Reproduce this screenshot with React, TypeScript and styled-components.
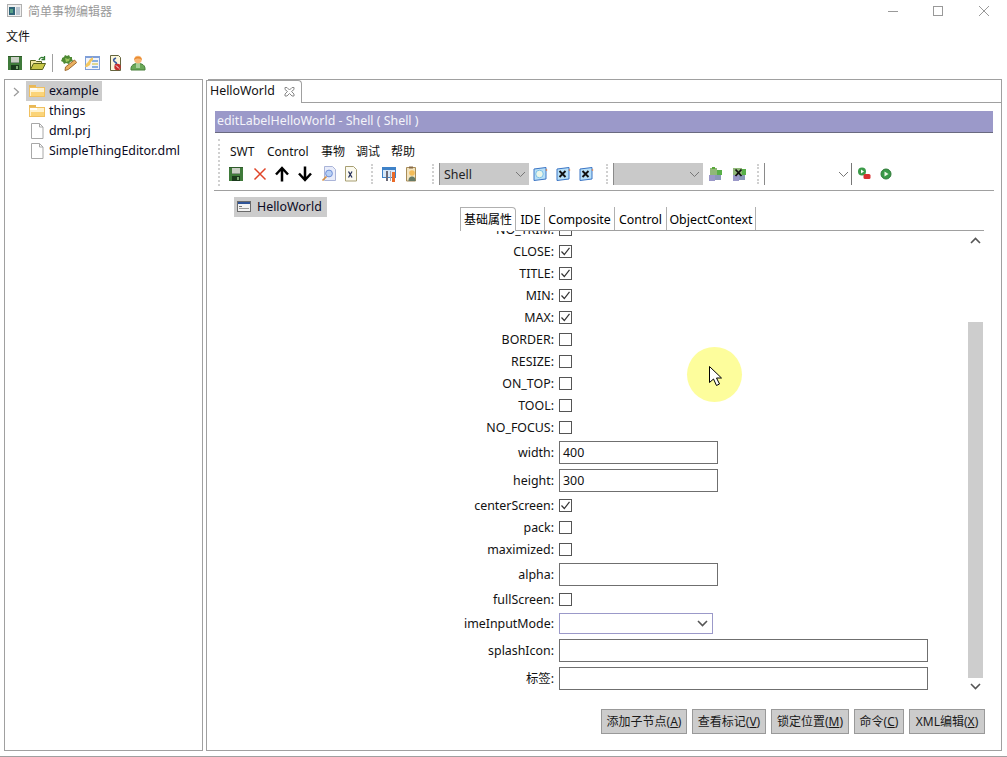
import React from "react";
import styled, { createGlobalStyle } from "styled-components";

const Global = createGlobalStyle`
  html, body { margin: 0; padding: 0; background: #fff; }
  body { font-family: "Noto Sans", "Noto Sans CJK SC", sans-serif; font-size: 12.4px; color: #000; }
`;

const Page = styled.div`
  position: relative;
  width: 1007px;
  height: 757px;
  overflow: hidden;
  background: #fff;
`;
const Placed = styled.div<{ $x: number; $y: number; $w?: number; $h?: number }>`
  position: absolute;
  left: ${(p) => p.$x}px;
  top: ${(p) => p.$y}px;
  ${(p) => (p.$w !== undefined ? `width: ${p.$w}px;` : "")}
  ${(p) => (p.$h !== undefined ? `height: ${p.$h}px;` : "")}
`;
const TitleText = styled(Placed)`
  color: #9a9a9a;
  font-size: 12px;
  line-height: 16px;
  white-space: nowrap;
`;
const MenuLabel = styled(Placed)`
  font-size: 12px;
  line-height: 16px;
  color: #111;
  white-space: nowrap;
`;
const IconSlot = styled(Placed)`
  width: 16px;
  height: 16px;
  line-height: 0;
`;
const VLine = styled(Placed)<{ $color?: string }>`
  width: 1px;
  background: ${(p) => p.$color ?? "#a0a0a0"};
`;
const HLine = styled(Placed)<{ $color?: string }>`
  height: 1px;
  background: ${(p) => p.$color ?? "#a0a0a0"};
`;
const Panel = styled(Placed)`
  box-sizing: border-box;
  border: 1px solid #a0a0a0;
  background: #fff;
`;
const MaxBox = styled(Placed)`
  box-sizing: border-box;
  border: 1px solid #999;
`;
const TreeHighlight = styled(Placed)`
  background: #cccccc;
`;
const TreeText = styled(Placed)`
  line-height: 18px;
  white-space: nowrap;
  color: #0a0a24;
`;
const TabTitle = styled(TreeText)`
  color: #111;
`;
const EditorTab = styled(Placed)`
  box-sizing: border-box;
  border: 1px solid #a0a0a0;
  border-bottom: none;
  border-radius: 0 4px 0 0;
  background: #fff;
`;
const TitleBand = styled(Placed)`
  box-sizing: border-box;
  background: #9b99c9;
  border-bottom: 1px solid #6a6a80;
  color: #f4f4fa;
  padding-left: 2px;
  line-height: 20px;
  white-space: nowrap;
`;
const Grip = styled(Placed)`
  width: 0;
  border-left: 2px dotted #d0d0d0;
`;
const Combo = styled(Placed)<{ $filled?: boolean }>`
  box-sizing: border-box;
  background: ${(p) => (p.$filled ? "#c9c9c9" : "#fff")};
  border-left: 1px solid #8a8a8a;
  padding-left: 4px;
  line-height: 24px;
  color: #222;
`;
const Chevron = styled.svg`
  position: absolute;
  right: 3px;
  top: 8px;
`;
const TabLabel = styled(Placed)`
  line-height: 18px;
  white-space: nowrap;
  text-align: center;
  color: #000;
`;
const CjkTabLabel = styled(TabLabel)`
  font-size: 12px;
`;
const ActiveTab = styled(Placed)`
  box-sizing: border-box;
  border: 1px solid #b0b0b0;
  border-bottom: none;
  border-radius: 0 4px 0 0;
  background: #fff;
`;
const FormLabel = styled(Placed)`
  width: 199px;
  text-align: right;
  line-height: 18px;
  white-space: nowrap;
  color: #111;
`;
const Check = styled(Placed)`
  box-sizing: border-box;
  width: 13px;
  height: 13px;
  border: 1px solid #555;
  background: #fff;
  line-height: 0;
`;
const Field = styled(Placed)`
  box-sizing: border-box;
  border: 1px solid #6f6f6f;
  background: #fff;
  padding-left: 3px;
  line-height: 21px;
  color: #111;
`;
const SelectField = styled(Placed)`
  box-sizing: border-box;
  border: 1px solid #9b99c9;
  background: #fff;
`;
const ClipArea = styled(Placed)`
  overflow: hidden;
`;
const Thumb = styled(Placed)`
  background: #cdcdcd;
`;
const ActionButton = styled(Placed)`
  box-sizing: border-box;
  height: 25px;
  background: #cccccc;
  border: 1px solid #999;
  text-align: center;
  line-height: 24px;
  font-size: 12px;
  white-space: nowrap;
  color: #1a1a1a;
  u { text-decoration: underline; }
`;
const Spot = styled(Placed)`
  border-radius: 50%;
  background: #fdfd9c;
`;

const Save = () => (
  <svg width="16" height="16" viewBox="0 0 16 16" shapeRendering="crispEdges">
    <rect x="1" y="1" width="14" height="14" fill="#3f7a3a" />
    <rect x="1" y="1" width="14" height="1" fill="#2e5a2a" />
    <rect x="4" y="2" width="8" height="6" fill="#c9cfc4" />
    <rect x="4" y="7" width="8" height="1" fill="#8a968a" />
    <rect x="4" y="10" width="8" height="5" fill="#1a3a1c" />
    <rect x="9" y="11" width="2" height="3" fill="#7ca872" />
  </svg>
);
const OpenFolder = () => (
  <svg width="16" height="16" viewBox="0 0 16 16">
    <path d="M0.5 5.5h5l1 1h5v8h-11z" fill="#f0e8a0" stroke="#55601c" />
    <path d="M3.5 8.5h12l-3 6h-12z" fill="#c8c648" stroke="#55601c" />
    <path d="M9 5c1-3 3-3 5-2M14.5 1v3.5h-3" fill="none" stroke="#2f7a2f" strokeWidth="1.3" />
  </svg>
);
const Wand = () => (
  <svg width="16" height="16" viewBox="0 0 16 16">
    <path d="M4 15.5l0.5-3.5 9-7 2.2 2.5-8.5 7z" fill="#eab060" stroke="#a06c30" />
    <path d="M1 3l2-1 1-2 2 1 2-1 1 2 2 0 0 2 1 2-3 1-1 2-3-1-2 1-1-2-2-1 1-2z" fill="#4f8a34" />
    <path d="M4 3l3 1 2-1-1 3-3 1z" fill="#9cc860" />
  </svg>
);
const Chart = () => (
  <svg width="16" height="16" viewBox="0 0 16 16" shapeRendering="crispEdges">
    <rect x="1" y="1" width="15" height="14" fill="#7f9fd8" />
    <rect x="2" y="3" width="13" height="11" fill="#f2f4fa" />
    <rect x="8" y="5" width="6" height="2" fill="#88b0e0" />
    <rect x="8" y="8" width="6" height="2" fill="#e0d890" />
    <rect x="8" y="11" width="6" height="2" fill="#88b0e0" />
    <path d="M1 12l1-3 2-2 2-3 3-2v3l-2 2-1 3-3 2z" fill="#f4c860" shapeRendering="auto" />
  </svg>
);
const DocBadge = () => (
  <svg width="16" height="16" viewBox="0 0 16 16">
    <path d="M2.5 0.5h8l2 2v13h-10z" fill="#fbf6dc" stroke="#64643e" />
    <path d="M8 3c-3 1-3 3-1 4s2 2 0 3" fill="none" stroke="#3a5aa0" strokeWidth="1.6" />
    <circle cx="9.5" cy="12" r="3.2" fill="#c82c2c" />
    <path d="M8 10.5l3 3" stroke="#fff" />
  </svg>
);
const Person = () => (
  <svg width="16" height="16" viewBox="0 0 16 16">
    <path d="M1 15c-0.5-5 3-6.5 7-6.5s7.5 1.5 7 6.5z" fill="#6aa858" stroke="#477f38" />
    <rect x="6" y="8" width="4" height="5" fill="#a8d098" />
    <circle cx="8" cy="4.6" r="3.8" fill="#f6b878" />
    <path d="M4 5C4 0.5 12 0.5 12 5 9.5 3.2 7 3 4 5z" fill="#ea8a30" />
  </svg>
);
const Folder = () => (
  <svg width="16" height="16" viewBox="0 0 16 16" shapeRendering="crispEdges">
    <rect x="0" y="2" width="7" height="2" fill="#e8b858" />
    <rect x="0" y="4" width="16" height="10" fill="#f0c060" />
    <rect x="1" y="5" width="14" height="8" fill="#fff2cc" />
    <rect x="1" y="5" width="7" height="2" fill="#fff" />
    <rect x="2" y="9" width="13" height="4" fill="#fbd478" />
  </svg>
);
const FileIcon = () => (
  <svg width="16" height="16" viewBox="0 0 16 16">
    <path d="M1.5 0.5h8l3.5 3.5v11.5h-11.500z" fill="#fff" stroke="#a8a8a8" />
    <path d="M9.5 0.500v3.500h3.500" fill="none" stroke="#a8a8a8" />
  </svg>
);
const Win = () => (
  <svg width="16" height="16" viewBox="0 0 16 16" shapeRendering="crispEdges">
    <rect x="2" y="2" width="14" height="11" fill="#6a6a6a" />
    <rect x="3" y="3" width="12" height="9" fill="#f2f2f2" />
    <rect x="3" y="3" width="12" height="2" fill="#2f5498" />
    <rect x="4" y="7" width="3" height="1" fill="#777" />
    <rect x="4" y="9" width="10" height="1" fill="#999" />
  </svg>
);
const RedX = () => (
  <svg width="16" height="16" viewBox="0 0 16 16">
    <path d="M2.500 2.500l11 11M13.500 2.500l-11 11" stroke="#e04428" strokeWidth="1.5" />
  </svg>
);
const Up = () => (
  <svg width="16" height="16" viewBox="0 0 16 16">
    <path d="M8 15.500V3M2 8.500L8 2l6 6.500" fill="none" stroke="#000" strokeWidth="2.500" />
  </svg>
);
const Down = () => (
  <svg width="16" height="16" viewBox="0 0 16 16">
    <path d="M8 0.500V13M2 7.500L8 14l6-6.500" fill="none" stroke="#000" strokeWidth="2.500" />
  </svg>
);
const Preview = () => (
  <svg width="16" height="16" viewBox="0 0 16 16">
    <path d="M3.500 0.500h8l3 3v11h-11z" fill="#e8ecfa" stroke="#aab4d8" />
    <circle cx="8" cy="7.500" r="3.400" fill="#b8d0f4" stroke="#6f8fd8" />
    <path d="M5.500 10.500L1.500 14.500" stroke="#d89040" strokeWidth="1.700" />
  </svg>
);
const XDoc = () => (
  <svg width="16" height="16" viewBox="0 0 16 16">
    <path d="M1.500 0.500h8l3 3v11.500h-11z" fill="#fbfaf0" stroke="#a89f72" />
    <path d="M4.500 5.500l3.500 6M8 5.500l-3.500 6" stroke="#26305a" strokeWidth="1.300" />
  </svg>
);
const Tools = () => (
  <svg width="16" height="16" viewBox="0 0 16 16" shapeRendering="crispEdges">
    <rect x="1" y="1" width="14" height="11" fill="#3e82c8" />
    <rect x="2" y="4" width="12" height="7" fill="#d8e8f8" />
    <rect x="5" y="5" width="2" height="10" fill="#6a6a78" />
    <rect x="9" y="5" width="1" height="10" fill="#a8a8b0" />
    <rect x="11" y="6" width="3" height="10" fill="#ea6a28" />
  </svg>
);
const BadgeDoc = () => (
  <svg width="16" height="16" viewBox="0 0 16 16">
    <path d="M3.500 1.500h9v13.500h-9z" fill="#f2e4c0" stroke="#a88c58" />
    <rect x="6" y="0.500" width="4" height="2" fill="#8a6a44" />
    <circle cx="9" cy="7" r="2.800" fill="#f4bc58" />
    <path d="M5.500 15c0-3.500 1.600-4.500 3.500-4.500s3.500 1 3.500 4.500z" fill="#667a66" />
  </svg>
);
const Globe = () => (
  <svg width="16" height="16" viewBox="0 0 16 16">
    <path d="M2 3l12-1.500v11.500l-12 1.500z" fill="#b8e0f8" stroke="#3a74c4" />
    <circle cx="7.500" cy="8" r="3.800" fill="#eaf6e8" stroke="#7cc0e8" />
    <circle cx="14.500" cy="4" r="0.800" fill="#f07830" />
  </svg>
);
const BlueX = () => (
  <svg width="16" height="16" viewBox="0 0 16 16">
    <path d="M2 3l12-1.500v11.500l-12 1.500z" fill="#b8e0f8" stroke="#3a74c4" />
    <path d="M4.500 5l6 6M10.500 5l-6 6" stroke="#111" strokeWidth="1.900" />
    <circle cx="14.500" cy="4" r="0.800" fill="#f07830" />
  </svg>
);
const Puzzle = () => (
  <svg width="16" height="16" viewBox="0 0 16 16" shapeRendering="crispEdges">
    <rect x="2" y="9" width="6" height="6" fill="#9a98c8" />
    <rect x="9" y="4" width="6" height="5" fill="#58b048" />
    <rect x="8" y="9" width="6" height="5" fill="#8a98b8" />
    <rect x="3" y="2" width="7" height="7" fill="#90b878" />
    <rect x="5" y="1" width="3" height="2" fill="#58a838" />
  </svg>
);
const PuzzleX = () => (
  <svg width="16" height="16" viewBox="0 0 16 16">
    <rect x="2" y="9" width="6" height="6" fill="#9a98c8" />
    <rect x="8" y="9" width="6" height="5" fill="#8a98b8" />
    <rect x="9" y="3" width="6" height="6" fill="#58b048" />
    <rect x="2" y="2" width="9" height="7" fill="#90b878" />
    <path d="M4.500 3.500l6 6.500M10.500 3.500l-6 6.500" stroke="#111" strokeWidth="1.800" />
  </svg>
);
const RunStop = () => (
  <svg width="16" height="16" viewBox="0 0 16 16">
    <circle cx="5" cy="5.500" r="4" fill="#3a9a48" />
    <path d="M4 3.500l3 2-3 2z" fill="#fff" />
    <rect x="6.500" y="8" width="7" height="5" rx="1.500" fill="#d83030" />
  </svg>
);
const Run = () => (
  <svg width="16" height="16" viewBox="0 0 16 16">
    <circle cx="8" cy="8" r="5" fill="#3a9a48" stroke="#2f7a38" />
    <path d="M6.500 5.500l4 2.500-4 2.500z" fill="#eef8e8" />
  </svg>
);
const CheckMark = () => (
  <svg width="11" height="11" viewBox="0 0 11 11">
    <path d="M1.500 5.500l2.800 3L9.500 1.800" fill="none" stroke="#333" strokeWidth="1.200" />
  </svg>
);
const Caret = ({ c = "#666", w = 1 }: { c?: string; w?: number }) => (
  <svg width="11" height="7" viewBox="0 0 11 7">
    <path d="M1 1l4.500 4.500L10 1" fill="none" stroke={c} strokeWidth={w} />
  </svg>
);
const ComboChevron = () => (
  <Chevron width="11" height="7" viewBox="0 0 11 7">
    <path d="M1 1l4.500 4.500L10 1" fill="none" stroke="#777" />
  </Chevron>
);

const checks: [string, number, boolean][] = [
  ["CLOSE:", 251, true],
  ["TITLE:", 273, true],
  ["MIN:", 295, true],
  ["MAX:", 317, true],
  ["BORDER:", 339, false],
  ["RESIZE:", 361, false],
  ["ON_TOP:", 383, false],
  ["TOOL:", 405, false],
  ["NO_FOCUS:", 427, false],
  ["centerScreen:", 505, true],
  ["pack:", 527, false],
  ["maximized:", 549, false],
  ["fullScreen:", 599, false],
];
const fields: [string, number, number, string][] = [
  ["width:", 441, 159, "400"],
  ["height:", 469, 159, "300"],
  ["alpha:", 563, 159, ""],
  ["splashIcon:", 639, 369, ""],
  ["标签:", 667, 369, ""],
];
const buttons: [string, string, number, number][] = [
  ["添加子节点(", "A", 601, 86],
  ["查看标记(", "V", 692, 74],
  ["锁定位置(", "M", 771, 78],
  ["命令(", "C", 854, 50],
  ["XML编辑(", "X", 909, 76],
];
const topTools: [React.FC, number][] = [
  [Save, 7], [OpenFolder, 30], [Wand, 61], [Chart, 84], [DocBadge, 108], [Person, 130],
];
const editorTools: [React.FC, number][] = [
  [Save, 228], [RedX, 252], [Up, 274], [Down, 297], [Preview, 321], [XDoc, 344],
  [Tools, 381], [BadgeDoc, 403],
  [Globe, 532], [BlueX, 555], [BlueX, 578],
  [Puzzle, 707], [PuzzleX, 731], [RunStop, 857], [Run, 878],
];
const editorMenus: [string, number][] = [["SWT", 230], ["Control", 267], ["事物", 321], ["调试", 356], ["帮助", 391]];
const tabs: [string, number, number][] = [
  ["IDE", 517, 27],
  ["Composite", 545, 69],
  ["Control", 615, 51],
  ["ObjectContext", 667, 88],
];

export default function App() {
  return (
    <Page>
      <Global />
      <IconSlot $x={7} $y={3}>
        <svg width="16" height="16" viewBox="0 0 16 16" shapeRendering="crispEdges">
          <rect x="0" y="1" width="15" height="13" fill="#b0b0b0" />
          <rect x="1" y="2" width="13" height="11" fill="#f0f0f0" />
          <rect x="2" y="4" width="6" height="8" fill="#2f6478" />
          <rect x="3" y="6" width="3" height="4" fill="#58a088" />
          <rect x="9" y="4" width="4" height="8" fill="#b8c4d0" />
        </svg>
      </IconSlot>
      <TitleText $x={28} $y={4}>简单事物编辑器</TitleText>
      <HLine $x={888} $y={11} $w={10} $color="#999" />
      <MaxBox $x={933} $y={6} $w={10} $h={10} />
      <IconSlot $x={979} $y={6}>
        <svg width="10" height="10" viewBox="0 0 10 10">
          <path d="M0 0l10 10M10 0L0 10" stroke="#999" strokeWidth="1" />
        </svg>
      </IconSlot>
      <MenuLabel $x={6} $y={29}>文件</MenuLabel>
      <VLine $x={52} $y={54} $h={18} />
      {topTools.map(([I, x]) => (
        <IconSlot key={x} $x={x} $y={55}><I /></IconSlot>
      ))}

      <Panel $x={4} $y={79} $w={199} $h={672} />
      <IconSlot $x={13} $y={87}>
        <svg width="8" height="10" viewBox="0 0 8 10">
          <path d="M1 1l4.500 4L1 9" fill="none" stroke="#999" strokeWidth="1.200" />
        </svg>
      </IconSlot>
      <TreeHighlight $x={26} $y={81} $w={76} $h={20} />
      <IconSlot $x={29} $y={83}><Folder /></IconSlot>
      <TreeText $x={49} $y={82}>example</TreeText>
      <IconSlot $x={29} $y={103}><Folder /></IconSlot>
      <TreeText $x={49} $y={102}>things</TreeText>
      <IconSlot $x={30} $y={123}><FileIcon /></IconSlot>
      <TreeText $x={49} $y={122}>dml.prj</TreeText>
      <IconSlot $x={30} $y={143}><FileIcon /></IconSlot>
      <TreeText $x={49} $y={142}>SimpleThingEditor.dml</TreeText>

      <Panel $x={206} $y={102} $w={796} $h={649} />
      <HLine $x={208} $y={79} $w={794} />
      <VLine $x={1001} $y={79} $h={24} />
      <EditorTab $x={206} $y={80} $w={96} $h={23} />
      <TabTitle $x={210} $y={82}>HelloWorld</TabTitle>
      <IconSlot $x={284} $y={86}>
        <svg width="11" height="11" viewBox="0 0 11 11">
          <path d="M1 1.500h2l2.500 2.500L8 1.500h2v2L7.500 5.500 10 8v2H8L5.500 7.500 3 10H1V8l2.500-2.500L1 3.500z" fill="#fff" stroke="#888" />
        </svg>
      </IconSlot>

      <TitleBand $x={215} $y={111} $w={778} $h={22}>editLabelHelloWorld - Shell ( Shell )</TitleBand>
      <Grip $x={218} $y={139} $h={47} />
      {editorMenus.map(([t, x]) => (
        <MenuLabel key={t} $x={x} $y={144}>{t}</MenuLabel>
      ))}
      {editorTools.map(([I, x]) => (
        <IconSlot key={x} $x={x} $y={166}><I /></IconSlot>
      ))}
      <Grip $x={371} $y={164} $h={20} />
      <Grip $x={432} $y={164} $h={20} />
      <Combo $x={439} $y={163} $w={90} $h={22} $filled>
        Shell
        <ComboChevron />
      </Combo>
      <Grip $x={606} $y={164} $h={20} />
      <Combo $x={613} $y={163} $w={90} $h={22} $filled>
        <ComboChevron />
      </Combo>
      <Grip $x={757} $y={164} $h={20} />
      <Combo $x={764} $y={163} $w={88} $h={22}>
        <ComboChevron />
      </Combo>
      <VLine $x={851} $y={163} $h={22} $color="#777" />
      <HLine $x={214} $y={190} $w={780} />

      <TreeHighlight $x={234} $y={197} $w={93} $h={20} />
      <IconSlot $x={235} $y={199}><Win /></IconSlot>
      <TreeText $x={257} $y={198}>HelloWorld</TreeText>

      <ClipArea $x={355} $y={231} $w={400} $h={6}>
        <FormLabel $x={0} $y={-10}>NO_TRIM:</FormLabel>
        <Check $x={204} $y={-8} />
      </ClipArea>
      {checks.map(([t, y, c]) => (
        <React.Fragment key={t}>
          <FormLabel $x={355} $y={y - 8}>{t}</FormLabel>
          <Check $x={559} $y={y - 6}>{c && <CheckMark />}</Check>
        </React.Fragment>
      ))}
      {fields.map(([t, y, w, v]) => (
        <React.Fragment key={t}>
          <FormLabel $x={355} $y={y + 3}>{t}</FormLabel>
          <Field $x={559} $y={y} $w={w} $h={23}>{v}</Field>
        </React.Fragment>
      ))}
      <FormLabel $x={355} $y={615}>imeInputMode:</FormLabel>
      <SelectField $x={559} $y={613} $w={154} $h={21} />
      <IconSlot $x={697} $y={620}><Caret c="#555" w={1.6} /></IconSlot>

      <HLine $x={460} $y={230} $w={524} />
      <ActiveTab $x={460} $y={207} $w={56} $h={24} />
      <CjkTabLabel $x={460} $y={211} $w={56}>基础属性</CjkTabLabel>
      {tabs.map(([t, x, w]) => (
        <React.Fragment key={t}>
          <TabLabel $x={x} $y={211} $w={w}>{t}</TabLabel>
          <VLine $x={x + w} $y={207} $h={23} $color="#b0b0b0" />
        </React.Fragment>
      ))}

      <IconSlot $x={970} $y={237}>
        <svg width="11" height="7" viewBox="0 0 11 7"><path d="M1 6l4.500-4.500L10 6" fill="none" stroke="#555" strokeWidth="1.600" /></svg>
      </IconSlot>
      <Thumb $x={968} $y={322} $w={15} $h={356} />
      <IconSlot $x={970} $y={683}><Caret c="#555" w={1.6} /></IconSlot>

      {buttons.map(([t, k, x, w]) => (
        <ActionButton key={k} $x={x} $y={709} $w={w}>
          {t}<u>{k}</u>)
        </ActionButton>
      ))}

      <HLine $x={0} $y={756} $w={1007} />

      <Spot $x={687} $y={347} $w={55} $h={55} />
      <IconSlot $x={709} $y={366}>
        <svg width="16" height="22" viewBox="0 0 16 22">
          <path d="M0.500 0.500V16.500L4.500 13L7.500 19.500L10.500 18L7.500 12H12.500z" fill="#fff" stroke="#000" />
        </svg>
      </IconSlot>
    </Page>
  );
}
